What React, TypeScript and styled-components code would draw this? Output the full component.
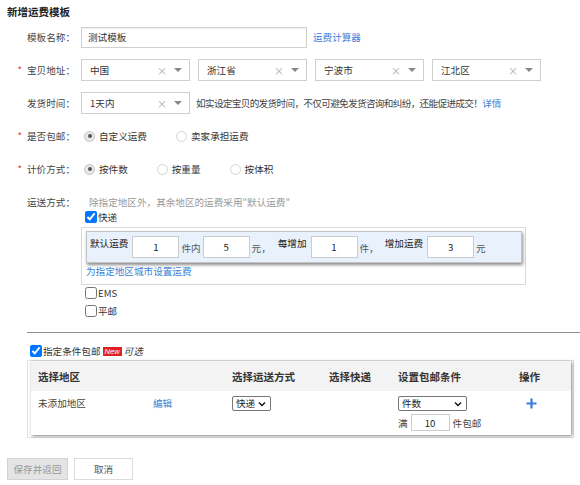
import React from "react";
import styled, { createGlobalStyle } from "styled-components";

const GlobalStyle = createGlobalStyle`
  html, body {
    margin: 0;
    padding: 0;
    background: #fff;
  }
  body {
    font-family: "Noto Sans CJK SC", "Liberation Sans", sans-serif;
    font-size: 9.6px;
    color: #333;
  }
  * {
    box-sizing: border-box;
  }
`;

const FONT = `"Noto Sans CJK SC", "Liberation Sans", sans-serif`;

type FeeField = { label: string; value: string; unit: string; ml: number };

const fees: FeeField[] = [
  { label: "默认运费", value: "1", unit: "件内", ml: 0 },
  { label: "", value: "5", unit: "元，", ml: 0 },
  { label: "每增加", value: "1", unit: "件，", ml: 5 },
  { label: "增加运费", value: "3", unit: "元", ml: 4 },
];

const Chevron = () => (
  <svg width="8" height="6" viewBox="0 0 8 6">
    <path d="M1 1.5l3 3 3-3" fill="none" stroke="#111" strokeWidth="1.4" />
  </svg>
);

const App: React.FC = () => {
  return (
    <Page>
      <GlobalStyle />
      <Title>新增运费模板</Title>

      <FormRow>
        <Label>模板名称：</Label>
        <TextInput defaultValue="测试模板" />
        <Link $ml={6}>运费计算器</Link>
      </FormRow>

      <FormRow>
        <Label>
          <Star>*</Star>宝贝地址：
        </Label>
        {["中国", "浙江省", "宁波市", "江北区"].map((v) => (
          <SelectBox key={v}>
            <SelectValue>{v}</SelectValue>
            <Clear>×</Clear>
            <Caret />
          </SelectBox>
        ))}
      </FormRow>

      <FormRow>
        <Label>发货时间：</Label>
        <SelectBox>
          <SelectValue>1天内</SelectValue>
          <Clear>×</Clear>
          <Caret />
        </SelectBox>
        <Note>如实设定宝贝的发货时间，不仅可避免发货咨询和纠纷，还能促进成交！</Note>
        <Link>详情</Link>
      </FormRow>

      <FormRow>
        <Label>
          <Star>*</Star>是否包邮：
        </Label>
        <RadioItem>
          <RadioDot $checked />
          自定义运费
        </RadioItem>
        <RadioItem>
          <RadioDot />
          卖家承担运费
        </RadioItem>
      </FormRow>

      <FormRow>
        <Label>
          <Star>*</Star>计价方式：
        </Label>
        <RadioItem>
          <RadioDot $checked />
          按件数
        </RadioItem>
        <RadioItem>
          <RadioDot />
          按重量
        </RadioItem>
        <RadioItem>
          <RadioDot />
          按体积
        </RadioItem>
      </FormRow>

      <FormRow $top>
        <Label $top>运送方式：</Label>
        <ShipArea>
          <Hint>除指定地区外，其余地区的运费采用"默认运费"</Hint>
          <CheckRow $ml={4}>
            <Check type="checkbox" defaultChecked />
            快递
          </CheckRow>
          <FeeBox>
            <FeePanel>
              {fees.map((f, i) => (
                <React.Fragment key={i}>
                  {f.label && <FeeLead $ml={f.ml}>{f.label}</FeeLead>}
                  <FeeInput defaultValue={f.value} />
                  <FeeUnit>{f.unit}</FeeUnit>
                </React.Fragment>
              ))}
            </FeePanel>
            <Link $block>为指定地区城市设置运费</Link>
          </FeeBox>
          <CheckRow $ml={4} $mt={1}>
            <Check type="checkbox" />
            EMS
          </CheckRow>
          <CheckRow $ml={4} $mt={4}>
            <Check type="checkbox" />
            平邮
          </CheckRow>
        </ShipArea>
      </FormRow>

      <Divider />

      <CheckRow $ml={23} $mt={11}>
        <Check type="checkbox" defaultChecked />
        指定条件包邮
        <NewBadge>New</NewBadge>
        <Optional>可选</Optional>
      </CheckRow>

      <TableWrap>
        <TableInner>
          <HeadRow>
            <span>选择地区</span>
            <span />
            <span>选择运送方式</span>
            <span>选择快递</span>
            <span>设置包邮条件</span>
            <span>操作</span>
          </HeadRow>
          <BodyRow>
            <Cell>未添加地区</Cell>
            <Cell>
              <Link>编辑</Link>
            </Cell>
            <Cell>
              <MiniSelect $w={39}>
                <span>快递</span>
                <Chevron />
              </MiniSelect>
            </Cell>
            <Cell />
            <Cell>
              <MiniSelect $w={69}>
                <span>件数</span>
                <Chevron />
              </MiniSelect>
              <CondLine>
                满<SmallInput defaultValue="10" />
                件包邮
              </CondLine>
            </Cell>
            <Cell>
              <AddButton>
                <svg width="11" height="11" viewBox="0 0 11 11">
                  <path d="M5.5 0.5v10M0.5 5.5h10" stroke="#3a7fd5" strokeWidth="2.2" />
                </svg>
              </AddButton>
            </Cell>
          </BodyRow>
        </TableInner>
      </TableWrap>

      <Actions>
        <Button $disabled>保存并返回</Button>
        <Button>取消</Button>
      </Actions>
    </Page>
  );
};

export default App;

const Page = styled.div`
  width: 580px;
  padding: 5px 0 20px 7px;
  font-family: ${FONT};
`;

const Title = styled.div`
  font-size: 10.5px;
  font-weight: bold;
  line-height: 14px;
  color: #222;
  margin-bottom: 7px;
`;

const FormRow = styled.div<{ $top?: boolean }>`
  display: flex;
  align-items: ${({ $top }) => ($top ? "flex-start" : "center")};
  height: ${({ $top }) => ($top ? "auto" : "22px")};
  padding-top: ${({ $top }) => ($top ? "3px" : "0")};
  margin-bottom: 11px;
`;

const Label = styled.div<{ $top?: boolean }>`
  width: 68px;
  flex-shrink: 0;
  margin-right: 6px;
  text-align: right;
  color: #444;
  line-height: ${({ $top }) => ($top ? "16px" : "22px")};
  white-space: nowrap;
`;

const Star = styled.span`
  color: #e4393c;
  margin-right: 5px;
`;

const TextInput = styled.input`
  width: 226px;
  height: 21px;
  border: 1px solid #cfcfcf;
  box-shadow: inset 0 1px 1px rgba(0, 0, 0, 0.06);
  padding: 0 6px;
  font-family: ${FONT};
  font-size: 9.6px;
  color: #333;
  outline: none;
`;

const Link = styled.a<{ $ml?: number; $block?: boolean }>`
  color: #3a7fd5;
  margin-left: ${({ $ml }) => $ml ?? 0}px;
  display: ${({ $block }) => ($block ? "block" : "inline")};
  line-height: ${({ $block }) => ($block ? "14px" : "normal")};
  margin-top: ${({ $block }) => ($block ? "1px" : "0")};
  cursor: pointer;
`;

const SelectBox = styled.div`
  width: 109px;
  height: 22px;
  border: 1px solid #cfcfcf;
  display: flex;
  align-items: center;
  padding: 0 7px 0 8px;
  margin-right: 8px;
  flex-shrink: 0;
`;

const SelectValue = styled.span`
  flex: 1;
  color: #333;
`;

const Clear = styled.span`
  color: #aaa;
  font-size: 10px;
`;

const Caret = styled.span`
  width: 0;
  height: 0;
  margin-left: 7px;
  border-left: 4px solid transparent;
  border-right: 4px solid transparent;
  border-top: 4px solid #888;
`;

const Note = styled.span`
  margin-left: -2px;
  color: #444;
  letter-spacing: -0.65px;
  white-space: nowrap;
`;

const RadioItem = styled.label`
  display: flex;
  align-items: center;
  margin-right: 26px;
  color: #333;
  white-space: nowrap;
`;

const RadioDot = styled.span<{ $checked?: boolean }>`
  width: 11px;
  height: 11px;
  border-radius: 50%;
  margin: 0 4px 0 3px;
  border: 1px solid ${({ $checked }) => ($checked ? "#c4c4c4" : "#d4d4d4")};
  background: ${({ $checked }) => ($checked ? "#e8e8e8" : "#fff")};
  display: flex;
  align-items: center;
  justify-content: center;
  &::after {
    content: "";
    width: 4px;
    height: 4px;
    border-radius: 50%;
    background: ${({ $checked }) => ($checked ? "#555" : "transparent")};
  }
`;

const ShipArea = styled.div`
  display: flex;
  flex-direction: column;
  align-items: flex-start;
`;

const Hint = styled.div`
  color: #999;
  line-height: 16px;
  padding-left: 8px;
  white-space: nowrap;
`;

const CheckRow = styled.label<{ $ml?: number; $mt?: number }>`
  display: flex;
  align-items: center;
  height: 14px;
  margin-left: ${({ $ml }) => $ml ?? 0}px;
  margin-top: ${({ $mt }) => $mt ?? 0}px;
  color: #333;
  white-space: nowrap;
`;

const Check = styled.input`
  width: 12px;
  height: 12px;
  margin: 0 1px 0 0;
`;

const FeeBox = styled.div`
  width: 445px;
  margin-top: 3px;
  border: 1px solid #d9d9d9;
  padding: 3px 3px 6px 4px;
`;

const FeePanel = styled.div`
  display: flex;
  align-items: center;
  background: #e8f1fc;
  border: 1px solid #c4c4c4;
  box-shadow: 1px 2px 3px rgba(0, 0, 0, 0.45);
  padding: 4px 3px;
`;

const FeeLead = styled.span<{ $ml: number }>`
  margin-left: ${({ $ml }) => $ml}px;
  margin-right: 4px;
  margin-bottom: 8px;
  color: #222;
  white-space: nowrap;
`;

const FeeInput = styled.input`
  width: 47px;
  height: 22px;
  border: 1px solid #ccc;
  text-align: center;
  font-family: ${FONT};
  font-size: 9.6px;
  color: #222;
  outline: none;
`;

const FeeUnit = styled.span`
  margin-left: 2px;
  margin-right: 2px;
  margin-bottom: -2px;
  color: #555;
  white-space: nowrap;
`;

const Divider = styled.div`
  margin: 14px 0 0 20px;
  border-top: 1px solid #8f8f8f;
`;

const NewBadge = styled.span`
  background: #e02222;
  color: #fff;
  font-family: "Liberation Sans", sans-serif;
  font-size: 7.5px;
  font-style: italic;
  line-height: 9px;
  padding: 0 2px;
  margin-left: 2px;
`;

const Optional = styled.span`
  font-style: italic;
  color: #333;
  margin-left: 2px;
`;

const TableWrap = styled.div`
  width: 547px;
  margin: 2px 0 0 20px;
  border: 1px solid #e2e2e2;
  padding: 0 2px 2px 3px;
`;

const TableInner = styled.div`
  background: #fff;
  box-shadow: 1px 1px 3px rgba(0, 0, 0, 0.5);
`;

const COLS = "115px 79px 97px 69px 121px 1fr";

const HeadRow = styled.div`
  display: grid;
  grid-template-columns: ${COLS};
  align-items: center;
  height: 30px;
  padding-left: 7px;
  background: #f3f3f3;
  font-size: 10.5px;
  font-weight: bold;
  color: #333;
`;

const BodyRow = styled.div`
  display: grid;
  grid-template-columns: ${COLS};
  align-items: start;
  height: 44px;
  padding: 5px 0 5px 7px;
`;

const Cell = styled.div`
  line-height: 14px;
  color: #444;
`;

const MiniSelect = styled.div<{ $w: number }>`
  width: ${({ $w }) => $w}px;
  height: 15px;
  border: 1px solid #767676;
  border-radius: 2px;
  padding: 0 4px 0 3px;
  display: flex;
  align-items: center;
  justify-content: space-between;
  color: #222;
  line-height: 13px;
`;

const CondLine = styled.div`
  display: flex;
  align-items: center;
  margin-top: 3px;
  white-space: nowrap;
`;

const SmallInput = styled.input`
  width: 39px;
  height: 17px;
  margin: 0 3px;
  border: 1px solid #ccc;
  text-align: center;
  font-family: ${FONT};
  font-size: 9.6px;
  color: #222;
  outline: none;
`;

const AddButton = styled.div`
  width: 24px;
  height: 14px;
  display: flex;
  align-items: center;
  justify-content: center;
`;

const Actions = styled.div`
  display: flex;
  gap: 6px;
  margin-top: 20px;
`;

const Button = styled.button<{ $disabled?: boolean }>`
  height: 22px;
  width: ${({ $disabled }) => ($disabled ? "61px" : "59px")};
  border: 1px solid ${({ $disabled }) => ($disabled ? "#d2d2d2" : "#dcdcdc")};
  background: ${({ $disabled }) => ($disabled ? "#e4e4e4" : "#fff")};
  color: ${({ $disabled }) => ($disabled ? "#999" : "#555")};
  font-family: ${FONT};
  font-size: 9.6px;
  padding: 0;
`;
